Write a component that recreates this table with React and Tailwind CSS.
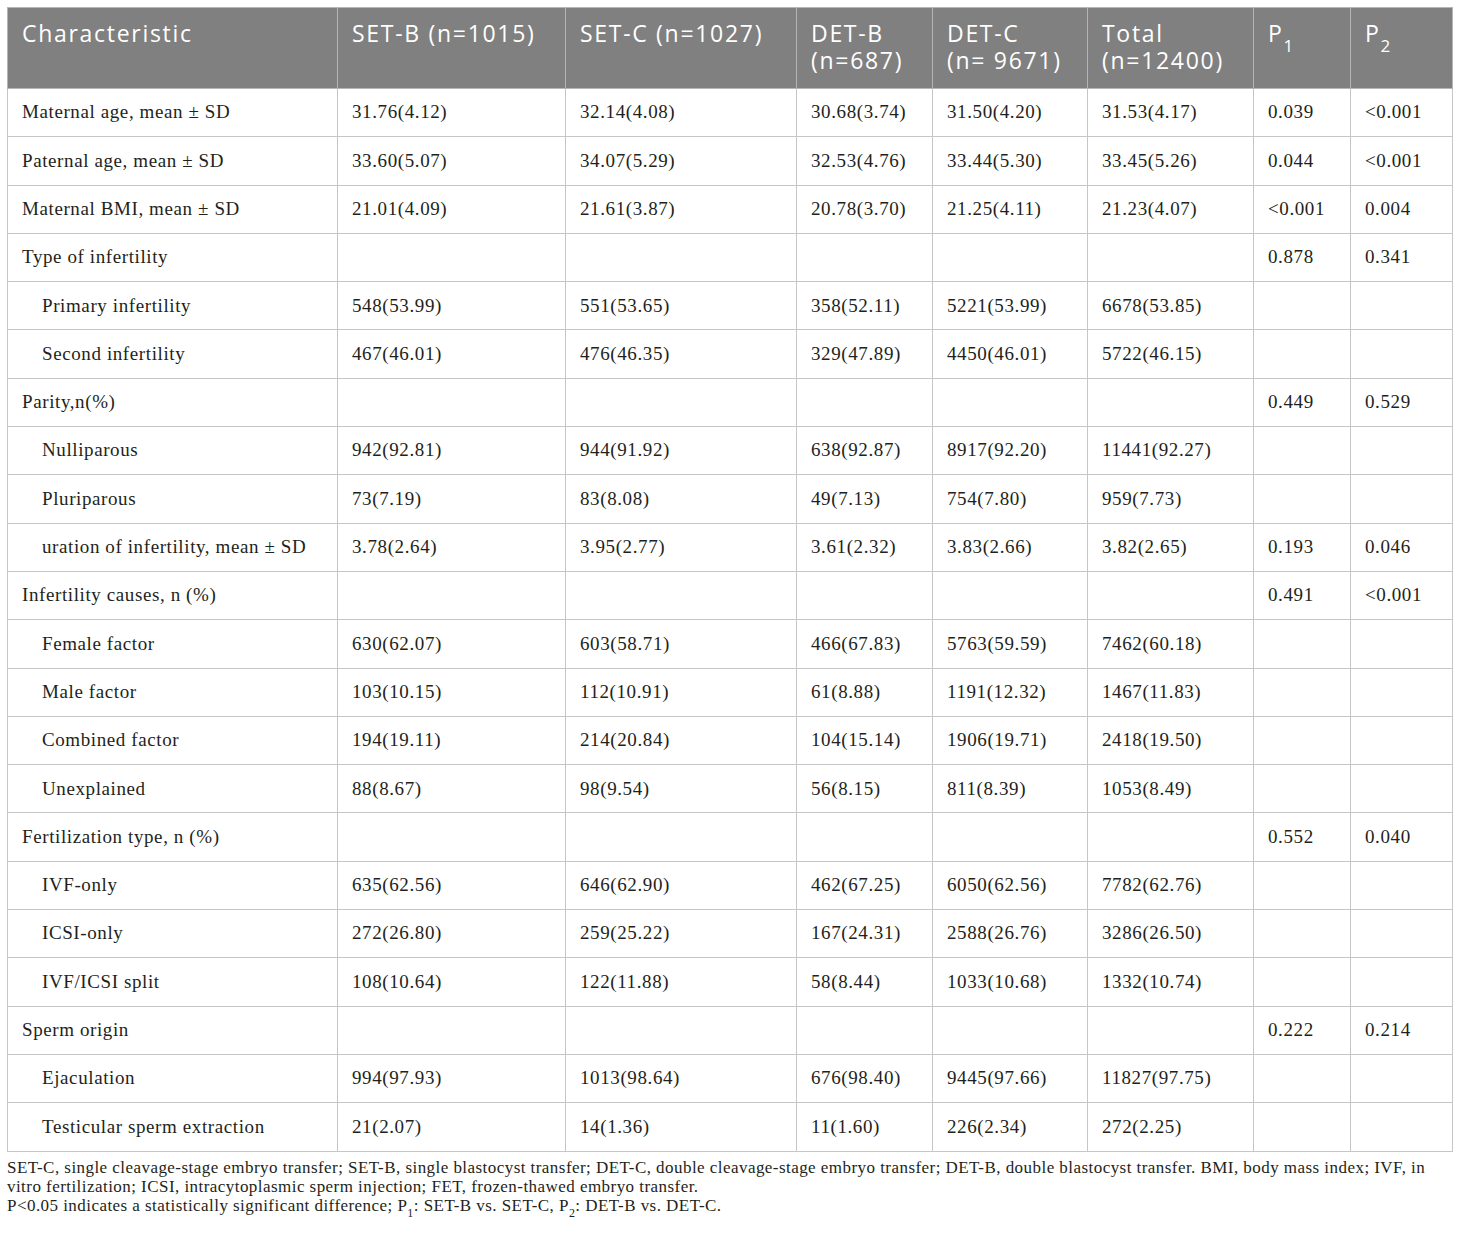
import React from "react";

const rows = [
  ["Maternal age, mean ± SD", false, "31.76(4.12)", "32.14(4.08)", "30.68(3.74)", "31.50(4.20)", "31.53(4.17)", "0.039", "<0.001"],
  ["Paternal age, mean ± SD", false, "33.60(5.07)", "34.07(5.29)", "32.53(4.76)", "33.44(5.30)", "33.45(5.26)", "0.044", "<0.001"],
  ["Maternal BMI, mean ± SD", false, "21.01(4.09)", "21.61(3.87)", "20.78(3.70)", "21.25(4.11)", "21.23(4.07)", "<0.001", "0.004"],
  ["Type of infertility", false, "", "", "", "", "", "0.878", "0.341"],
  ["Primary infertility", true, "548(53.99)", "551(53.65)", "358(52.11)", "5221(53.99)", "6678(53.85)", "", ""],
  ["Second infertility", true, "467(46.01)", "476(46.35)", "329(47.89)", "4450(46.01)", "5722(46.15)", "", ""],
  ["Parity,n(%)", false, "", "", "", "", "", "0.449", "0.529"],
  ["Nulliparous", true, "942(92.81)", "944(91.92)", "638(92.87)", "8917(92.20)", "11441(92.27)", "", ""],
  ["Pluriparous", true, "73(7.19)", "83(8.08)", "49(7.13)", "754(7.80)", "959(7.73)", "", ""],
  ["uration of infertility, mean ± SD", true, "3.78(2.64)", "3.95(2.77)", "3.61(2.32)", "3.83(2.66)", "3.82(2.65)", "0.193", "0.046"],
  ["Infertility causes, n (%)", false, "", "", "", "", "", "0.491", "<0.001"],
  ["Female factor", true, "630(62.07)", "603(58.71)", "466(67.83)", "5763(59.59)", "7462(60.18)", "", ""],
  ["Male factor", true, "103(10.15)", "112(10.91)", "61(8.88)", "1191(12.32)", "1467(11.83)", "", ""],
  ["Combined factor", true, "194(19.11)", "214(20.84)", "104(15.14)", "1906(19.71)", "2418(19.50)", "", ""],
  ["Unexplained", true, "88(8.67)", "98(9.54)", "56(8.15)", "811(8.39)", "1053(8.49)", "", ""],
  ["Fertilization type, n (%)", false, "", "", "", "", "", "0.552", "0.040"],
  ["IVF-only", true, "635(62.56)", "646(62.90)", "462(67.25)", "6050(62.56)", "7782(62.76)", "", ""],
  ["ICSI-only", true, "272(26.80)", "259(25.22)", "167(24.31)", "2588(26.76)", "3286(26.50)", "", ""],
  ["IVF/ICSI split", true, "108(10.64)", "122(11.88)", "58(8.44)", "1033(10.68)", "1332(10.74)", "", ""],
  ["Sperm origin", false, "", "", "", "", "", "0.222", "0.214"],
  ["Ejaculation", true, "994(97.93)", "1013(98.64)", "676(98.40)", "9445(97.66)", "11827(97.75)", "", ""],
  ["Testicular sperm extraction", true, "21(2.07)", "14(1.36)", "11(1.60)", "226(2.34)", "272(2.25)", "", ""],
];

const th =
  "border border-[#b5b5b5] bg-[#808080] text-white text-left align-top font-normal pl-[14px] pr-2 pt-[12px] pb-0 text-[23px] leading-[27px] tracking-[1.7px]";
const td =
  "border border-[#c6c6c6] text-left align-middle pl-[14px] pr-1 h-[48.3px] text-[19px] text-[#231f20] tracking-[0.6px]";
const hsub = "text-[17px] leading-none align-[-6px] tracking-normal";

export default function App() {
  return (
    <div className="bg-white w-[1460px] h-[1238px] pl-[7px] pt-[7px]">
      <table className="border-collapse table-fixed w-[1445px]">
        <colgroup>
          <col className="w-[330px]" />
          <col className="w-[228px]" />
          <col className="w-[231px]" />
          <col className="w-[136px]" />
          <col className="w-[155px]" />
          <col className="w-[166px]" />
          <col className="w-[97px]" />
          <col className="w-[102px]" />
        </colgroup>
        <thead className="font-['Open_Sans',sans-serif]">
          <tr className="h-[81px]">
            <th className={th}>Characteristic</th>
            <th className={th}>SET-B (n=1015)</th>
            <th className={th}>SET-C (n=1027)</th>
            <th className={th}>DET-B<br />(n=687)</th>
            <th className={th}>DET-C<br />(n= 9671)</th>
            <th className={th}>Total<br />(n=12400)</th>
            <th className={th}>P<sub className={hsub}>1</sub></th>
            <th className={th}>P<sub className={hsub}>2</sub></th>
          </tr>
        </thead>
        <tbody className="font-['Liberation_Serif',serif]">
          {rows.map((r, i) => (
            <tr key={i}>
              <td className={td}>
                <span className={r[1] ? "pl-[20px]" : ""}>{r[0]}</span>
              </td>
              {r.slice(2).map((c, j) => (
                <td key={j} className={td}>{c}</td>
              ))}
            </tr>
          ))}
        </tbody>
      </table>
      <div className="font-['Liberation_Serif',serif] text-[17px] leading-[19px] text-[#231f20] mt-[6px] w-[1445px] tracking-[0.45px]">
        <p>
          SET-C, single cleavage-stage embryo transfer; SET-B, single blastocyst transfer; DET-C, double cleavage-stage embryo transfer; DET-B, double blastocyst transfer. BMI, body mass index; IVF, in vitro fertilization; ICSI, intracytoplasmic sperm injection; FET, frozen-thawed embryo transfer.
        </p>
        <p>
          P&lt;0.05 indicates a statistically significant difference; P<sub className="text-[12px] align-[-3px]">1</sub>: SET-B vs. SET-C, P<sub className="text-[12px] align-[-3px]">2</sub>: DET-B vs. DET-C.
        </p>
      </div>
    </div>
  );
}
